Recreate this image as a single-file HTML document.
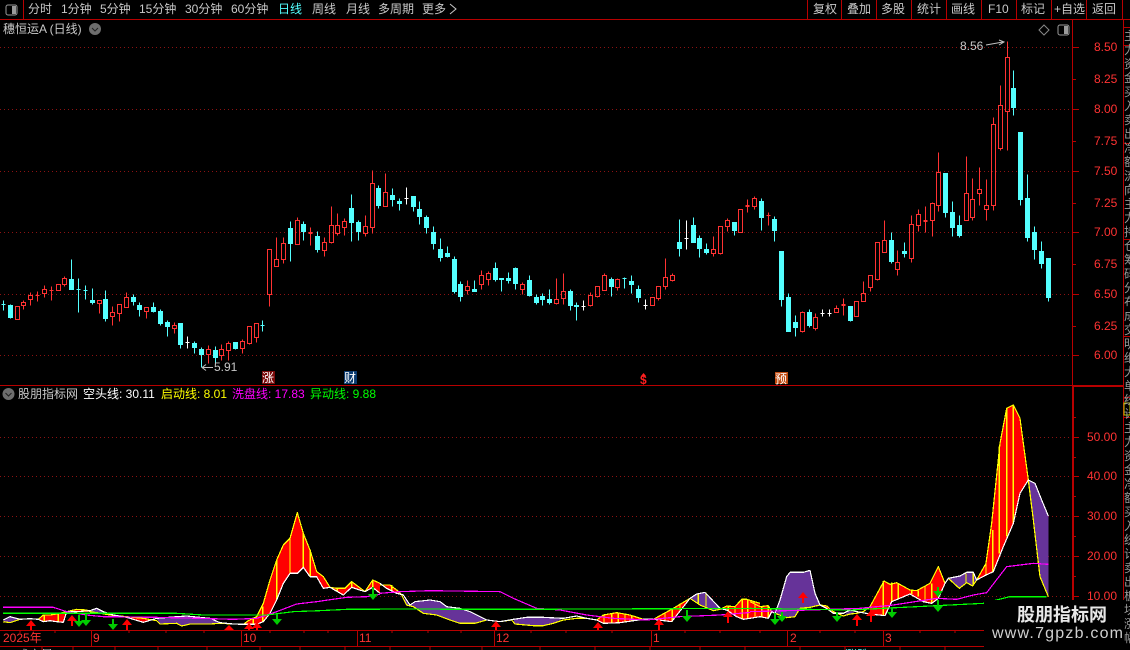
<!DOCTYPE html>
<html><head><meta charset="utf-8"><style>
html,body{margin:0;padding:0;background:#000;width:1130px;height:650px;overflow:hidden}
svg{position:absolute;left:0;top:0;font-family:"Liberation Sans","WenQuanYi Zen Hei","Noto Sans CJK SC",sans-serif;font-size:12px}
.t{fill:#c8c8c8}.p{fill:#ff3333}
#s{position:absolute;left:1124px;top:29px;width:6px;height:620px;overflow:hidden;color:#999;font:12px/14px "WenQuanYi Zen Hei","Noto Sans CJK SC",sans-serif}
#s div{width:12px}
</style></head><body>
<svg width="1130" height="650" viewBox="0 0 1130 650">
<rect width="1130" height="650" fill="#000"/>
<g stroke="#8c1212" stroke-dasharray="1 3" fill="none" shape-rendering="crispEdges">
<path d="M0 47.5H1072M0 109.5H1072M0 171.5H1072M0 232.5H1072M0 294.5H1072M0 355.5H1072M0 437.5H1072M0 476.5H1072M0 516.5H1072M0 556.5H1072M0 596.5H1072"/>
</g>
<g stroke="#b80000" fill="none" shape-rendering="crispEdges">
<path d="M0 19.5H1130M23.5 0V19M807.5 0V19M841.5 0V19M876.5 0V19M911.5 0V19M946.5 0V19M981.5 0V19M1016.5 0V19M1051.5 0V19M1086.5 0V19M1122.5 0V19"/>
<path d="M0 385.5H1123M1072.5 19V600M1123.5 19V600M1073 47.5h6M1073 79.5h3M1073 109.5h6M1073 141.5h3M1073 171.5h6M1073 203.5h3M1073 232.5h6M1073 264.5h3M1073 294.5h6M1073 326.5h3M1073 355.5h6"/>
<path d="M1072 386.5h51M1073.5 386V600M1073 437.5h6M1073 457.5h3M1073 476.5h6M1073 496.5h3M1073 516.5h6M1073 536.5h3M1073 556.5h6M1073 576.5h3M1073 596.5h6M1073 417.5h3"/>
<path d="M1124 27.5h6M1124 45.5h6M1124 143.5h6M1124 239.5h6M1124 336.5h6M1124 397.5h6M1124 417.5h6"/>
<path d="M0 630.5H984M0 646.5H984M91.5 630V646M241.5 630V646M357.5 630V646M494.5 630V646M651.5 630V646M787.5 630V646M883.5 630V646"/>
<path d="M20 630v3M55 630v3M129 630v3M166 630v3M204 630v3M270 630v3M304 630v3M328 630v3M392 630v3M428 630v3M461 630v3M531 630v3M566 630v3M612 630v3M685 630v3M720 630v3M760 630v3M820 630v3M855 630v3M920 630v3M955 630v3"/>
<path d="M42 646v4M73 646v4M115 646v4M158 646v4M207 646v4M260 646v4M300 646v4M345 646v4M390 646v4M430 646v4M482 646v4M540 646v4M595 646v4M650 646v4M700 646v4M745 646v4M800 646v4M845 646v4M900 646v4M945 646v4"/>
</g>
<!-- candles -->
<g transform="translate(.5,.5)" shape-rendering="crispEdges">
<path fill="none" stroke="#ff3232" d="M15 306h4V319h-4zM23 300V302M23 305V309M21 302h4V305h-4zM30 292V295M30 299V305M28 295h4V299h-4zM37 291V301M35 295h4M44 285V289M44 293V297M42 289h4V293h-4zM51 286V300M49 290h4M56 284h4V290h-4zM64 276V278M64 284V286M62 278h4V284h-4zM99 303V313M97 300h4V303h-4zM112 306V312M112 316V325M110 312h4V316h-4zM119 313V321M117 304h4V313h-4zM126 292V297M124 297h4V307h-4zM146 311V318M144 307h4V311h-4zM174 322V325M174 328V333M172 325h4V328h-4zM208 345V349M208 354V363M206 349h4V354h-4zM221 344V349M221 355V360M219 349h4V355h-4zM228 341V343M228 350V360M226 343h4V350h-4zM242 339V341M242 348V353M240 341h4V348h-4zM249 343V344M247 326h4V343h-4zM256 337V342M254 323h4V337h-4zM269 294V306M267 249h4V294h-4zM276 237V259M274 259h4V266h-4zM283 237V243M283 259V263M281 243h4V259h-4zM297 217V220M295 220h4V244h-4zM310 227V245M308 232h4M308 233h4M324 237V242M324 250V256M322 242h4V250h-4zM331 206V225M331 242V243M329 225h4V242h-4zM337 213V225M337 233V235M335 225h4V233h-4zM344 218V221M344 227V235M342 221h4V227h-4zM365 215V226M365 233V236M363 226h4V233h-4zM372 170V183M372 227V233M370 183h4V227h-4zM385 173V192M383 192h4V206h-4zM467 280V286M467 290V294M465 286h4V290h-4zM481 270V275M481 284V289M479 275h4V284h-4zM488 271V273M488 279V285M486 273h4V279h-4zM522 282V284M522 289V294M520 284h4V289h-4zM556 278V299M556 303V304M554 299h4V303h-4zM563 273V291M563 298V304M561 291h4V298h-4zM590 292V295M590 305V306M588 295h4V305h-4zM597 296V297M595 286h4V296h-4zM604 273V275M602 275h4V290h-4zM617 278V279M617 287V290M615 279h4V287h-4zM650 297h4V305h-4zM658 298V300M656 286h4V298h-4zM665 258V277M665 286V289M663 277h4V286h-4zM672 273V275M672 280V281M670 275h4V280h-4zM713 236V249M713 253V256M711 249h4V253h-4zM720 253V254M718 226h4V253h-4zM727 218V220M727 226V231M725 220h4V226h-4zM738 209h4V232h-4zM747 199V212M745 205h4M745 206h4M754 196V198M754 206V209M752 198h4V206h-4zM768 212V225M766 215h4M802 311V312M802 331V332M800 312h4V331h-4zM815 313V317M815 328V330M813 317h4V328h-4zM836 305V308M834 308h4V312h-4zM843 298V315M841 304h4M841 305h4M854 301h4V316h-4zM863 281V293M861 293h4V301h-4zM870 287V291M868 275h4V287h-4zM877 279V280M875 242h4V279h-4zM884 220V240M882 240h4V252h-4zM897 250V262M897 269V275M895 262h4V269h-4zM911 215V224M911 258V262M909 224h4V258h-4zM918 209V214M918 225V231M916 214h4V225h-4zM925 206V232M923 220h4M923 221h4M932 202V203M932 220V236M930 203h4V220h-4zM938 152V172M938 205V211M936 172h4V205h-4zM966 156V193M964 193h4V220h-4zM972 178V199M972 217V220M970 199h4V217h-4zM979 167V189M979 193V205M977 189h4V193h-4zM986 179V205M986 209V220M984 205h4V209h-4zM993 117V124M993 205V210M991 124h4V205h-4zM1000 85V105M1000 148V150M998 105h4V148h-4zM1007 41V57M1007 111V150M1005 57h4V111h-4z"/>
<path fill="#54ffff" stroke="#54ffff" d="M3 300V310M1 304h4M10 304V318M8 305h4V317h-4zM71 259V289M69 279h4V289h-4zM78 278V312M76 289h4M85 285V299M83 290h4M92 288V304M90 300h4V302h-4zM105 290V321M103 299h4V318h-4zM133 294V305M131 297h4V301h-4zM139 302V316M137 305h4V309h-4zM153 302V312M151 307h4V311h-4zM160 309V325M158 311h4V323h-4zM167 320V336M165 322h4V326h-4zM180 323V348M178 323h4V344h-4zM194 341V353M192 343h4V347h-4zM201 347V367M199 349h4V354h-4zM215 346V362M213 350h4V357h-4zM235 342V349M233 342h4V348h-4zM262 320V331M260 325h4M290 221V261M288 228h4V243h-4zM303 221V240M301 224h4V231h-4zM317 231V252M315 236h4V249h-4zM351 194V241M349 208h4V222h-4zM358 220V240M356 222h4V231h-4zM378 185V208M376 188h4V205h-4zM392 188V206M390 195h4V199h-4zM399 198V210M397 201h4V203h-4zM413 196V211M411 196h4V206h-4zM419 201V224M417 209h4V216h-4zM426 215V233M424 217h4V227h-4zM433 226V249M431 232h4V243h-4zM440 238V261M438 249h4V257h-4zM447 246V257M445 253h4V256h-4zM454 256V293M452 259h4V291h-4zM460 281V301M458 284h4V296h-4zM474 280V291M472 289h4V291h-4zM495 262V281M493 268h4V279h-4zM501 278V291M499 278h4V279h-4zM508 272V283M506 278h4V280h-4zM515 267V289M513 268h4V283h-4zM529 275V296M527 280h4V295h-4zM536 294V304M534 297h4V302h-4zM542 293V305M540 296h4V299h-4zM549 289V304M547 299h4V302h-4zM570 289V310M568 291h4V305h-4zM576 302V320M574 305h4V306h-4zM611 277V296M609 279h4V286h-4zM624 277V288M622 278h4M631 275V293M629 281h4V284h-4zM638 285V302M636 289h4V297h-4zM679 219V256M677 242h4V248h-4zM693 217V242M691 225h4V242h-4zM699 235V257M697 238h4V248h-4zM706 243V254M704 249h4V252h-4zM734 222V235M732 222h4V230h-4zM761 198V230M759 201h4V217h-4zM774 216V241M772 219h4V230h-4zM781 251V306M779 251h4V299h-4zM788 293V331M786 297h4V331h-4zM795 315V336M793 322h4V327h-4zM809 309V327M807 312h4V325h-4zM850 306V321M848 306h4V320h-4zM891 232V263M889 240h4V261h-4zM904 242V257M902 251h4V253h-4zM945 173V217M943 173h4V212h-4zM952 201V236M950 212h4V227h-4zM959 215V237M957 225h4V235h-4zM1013 70V115M1011 88h4V107h-4zM1020 132V205M1018 132h4V199h-4zM1027 174V241M1025 198h4V237h-4zM1034 226V259M1032 232h4V249h-4zM1041 241V268M1039 251h4V263h-4zM1048 258V301M1046 258h4V297h-4z"/>
<path fill="none" stroke="#fff" d="M187 336V348M185 342h4M406 187V204M404 198h4M583 300V310M581 306h4M645 299V309M643 305h4M686 220V249M684 238h4M822 309V316M820 313h4M829 309V316M827 313h4"/>
</g>
<!-- high/low marks -->
<path d="M202 367.5H213M202 367.5l4-3M202 367.5l4 3M986 45L1003 42M999 40l5 2-5 3" stroke="#c0c0c0" fill="none"/>
<text class="t" x="214" y="371">5.91</text>
<text class="t" x="960" y="50">8.56</text>
<!-- indicator -->
<g fill="none" stroke-width="3.6" stroke-linejoin="round" shape-rendering="crispEdges">
<g transform="translate(0,500) scale(.33333)">
<g fill="#f00" stroke="none"><polygon points="115,358 130,345 150,345 170,342 200,335 190,367 170,365 150,362 130,365"/><polygon points="200,335 230,328 260,330 270,335 230,337"/><polygon points="380,352 430,355 465,358 430,367"/><polygon points="730,373 745,362 770,350 790,310 810,240 830,180 850,135 870,115 892,38 910,100 930,150 950,215 970,230 990,262 970,265 950,230 930,230 910,202 892,220 870,220 850,250 830,300 810,340 790,365 770,373"/><polygon points="1000,266 1035,265 1055,245 1075,260 1095,275 1055,262 1030,285"/><polygon points="1095,275 1118,240 1140,250 1140,280 1118,262"/></g>
<g fill="#663399" stroke="none"><polygon points="10,360 30,350 60,358 30,368 10,365"/><polygon points="270,335 290,325 310,335 330,345 290,338"/><polygon points="470,355 530,350 560,348 630,355 660,368 640,372 570,372 545,378 530,370 480,372"/></g>
<path stroke="#ff0" d="M133 345V365M175 342V365M760 352V373M788 320V368M830 180V300M870 115V220M910 100V202M931 150V230M1012 265V275M1055 245V262M1118 240V262"/>
<polyline stroke="#ff0" points="10,365 30,368 60,358 90,356 115,358 130,345 150,345 170,342 200,335 230,328 260,330 270,335 290,338 330,345 380,350 430,355 470,362 480,372 530,370 545,378 570,372 630,372 660,370 700,372 730,373 745,362 770,350 790,310 810,240 830,180 850,135 870,115 892,38 910,100 930,150 950,215 970,230 990,262 1010,265 1035,265 1055,245 1075,260 1095,275 1118,240 1140,250"/>
<polyline stroke="#fff" points="10,360 30,350 60,358 90,356 115,358 130,365 150,362 170,365 190,367 200,335 230,335 270,332 290,325 310,335 340,345 380,352 430,367 470,355 530,350 560,348 630,355 660,368 700,372 730,373 770,373 790,365 810,340 830,300 850,250 870,220 892,220 910,202 930,230 950,230 970,265 990,262 1030,285 1055,262 1095,275 1118,262 1140,280"/>
<polyline stroke="#ff00ff" points="9,322 160,322 200,335 260,345 310,350 470,352 600,355 700,358 770,355 830,335 890,312 950,305 1040,292 1100,290 1140,283"/>
<polyline stroke="#00ff00" points="9,340 530,340 610,345 800,345 880,335 960,332 1040,328 1140,328"/>
</g>
<g transform="translate(380,560) scale(.33333)">
<g fill="#f00" stroke="none"><polygon points="0,75 30,75 50,90 65,105 50,100 20,85 0,70"/><polygon points="650,180 670,165 710,158 750,165 790,178 720,188 670,190"/><polygon points="820,178 880,145 930,115 875,185"/><polygon points="1020,148 1040,138 1065,140 1085,118 1100,118 1140,130 1140,170 1090,178 1070,170 1040,150"/></g>
<g fill="#663399" stroke="none"><polygon points="70,105 90,135 105,125 150,120 180,125 200,140 240,145 270,155 320,180 285,190 240,190 210,180 170,165 130,160 100,140 80,135"/><polygon points="400,178 440,172 490,172 550,175 520,190 490,197 460,197 405,192"/><polygon points="930,115 950,102 975,97 1020,145 1000,152 960,135"/></g>
<path stroke="#ff0" d="M35 75V95M672 165V190M695 160V188M715 158V188M735 162V187M755 167V184M855 160V182M877 145V185M900 130V155M955 102V130M978 97V140M1045 138V152M1065 140V168M1087 118V178M1103 118V176M1122 124V172"/>
<polyline stroke="#ff0" points="0,75 30,75 50,90 65,105 80,135 100,140 130,160 170,165 210,180 240,190 285,190 320,180 360,185 395,180 405,192 460,197 490,197 520,190 550,180 590,175 620,175 650,180 670,165 710,158 750,165 790,178 820,178 880,145 930,115 960,135 1000,152 1020,148 1040,138 1065,140 1085,118 1100,118 1140,130"/>
<polyline stroke="#fff" points="0,70 20,85 50,100 70,105 90,135 105,125 150,120 180,125 200,140 240,145 270,155 320,180 360,185 400,178 440,172 490,172 550,175 590,168 620,175 650,180 670,190 720,188 790,178 820,178 875,185 930,115 950,102 975,97 1020,145 1040,150 1070,170 1090,178 1140,170"/>
<polyline stroke="#ff00ff" points="0,100 60,95 150,92 360,95 400,115 470,145 540,150 620,165 700,175 800,180 900,170 1020,165 1140,155"/>
<polyline stroke="#00ff00" points="0,147 400,148 1140,145"/>
</g>
<g transform="translate(750,390) scale(.33333)">
<g fill="#f00" stroke="none"><polygon points="0,635 10,640 30,650 55,647 65,665 55,685 30,680 0,685"/><polygon points="210,645 230,648 250,665 250,670 230,655"/><polygon points="360,650 402,573 420,583 440,578 480,600 500,602 540,580 565,530 585,580 565,625 545,640 520,635 480,612 425,635 405,677 360,672"/><polygon points="680,570 708,520 725,400 750,160 770,55 790,45 810,85 820,160 835,270 810,310 790,400 760,470 730,545 708,555"/></g>
<g fill="#663399" stroke="none"><polygon points="75,670 90,630 110,560 120,547 160,547 180,541 195,610 210,645 180,652 150,655 135,680 110,683"/><polygon points="285,675 300,660 315,670 300,675"/><polygon points="595,565 630,558 650,547 670,547 680,570 668,588 650,578 628,595"/><polygon points="835,270 855,280 875,330 895,378 895,620 870,560 850,390"/></g>
<path stroke="#ff0" d="M15 640V682M35 650V680M55 647V685M400 573V677M425 578V635M445 580V625M485 600V612M505 602V620M525 590V635M545 580V640M648 550V578M670 547V585M708 520V555M728 420V545M748 170V490M770 55V440M790 45V400"/>
<polyline stroke="#ff0" points="0,635 10,640 30,650 55,647 65,665 75,670 110,683 135,680 150,655 180,652 210,645 230,648 250,665 280,678 300,672 320,670 340,665 360,650 402,573 420,583 440,578 480,600 500,602 540,580 565,530 585,580 595,565 628,595 650,578 668,588 680,570 708,520 725,400 750,160 770,55 790,45 810,85 820,160 835,270 850,390 870,560 895,620"/>
<polyline stroke="#fff" points="0,685 30,680 55,685 65,665 75,670 90,630 110,560 120,547 160,547 180,541 195,610 210,645 230,655 250,670 280,670 300,660 320,665 360,672 405,677 425,635 480,612 520,635 545,640 565,625 585,580 595,565 630,558 650,547 670,547 680,570 708,555 730,545 760,470 790,400 810,310 835,270 855,280 875,330 895,378"/>
<polyline stroke="#ff00ff" points="0,665 180,660 330,655 430,645 560,625 620,628 670,615 710,608 770,530 850,520 895,523"/>
<polyline stroke="#00ff00" points="0,655 300,660 500,650 700,640 780,620 890,620"/>
</g>
</g>
<!-- arrows -->
<path fill="#ff0000" d="M31 620l-5 6h4V630h2V626h4zM72 615l-5 6h4V626h2V621h4zM127 619l-5 6h4V630h2V625h4zM229 625l-5 5h10zM249 623l-5 6h4V630h2V629h4zM257 622l-5 6h4V630h2V628h4zM496 621l-5 6h4V630h2V627h4zM598 622l-5 6h4V630h2V628h4zM659 619l-5 6h4V630h2V625h4zM728 611l-5 6h4V623h2V617h4zM803 592l-5 6h4V603h2V598h4zM857 614l-5 6h4V626h2V620h4zM871 610l-5 6h4V622h2V616h4z"/>
<path fill="#00cc00" d="M79 627l-5-6h4V615h2V621h4zM86 626l-5-6h4V614h2V620h4zM113 630l-5-6h4V619h2V624h4zM277 625l-5-6h4V614h2V619h4zM373 600l-5-6h4V587h2V594h4zM687 622l-5-6h4V610h2V616h4zM775 625l-5-6h4V613h2V619h4zM782 622l-5-6h4V612h2V616h4zM837 622l-5-6h4V612h2V616h4zM892 618l-5-6h4V607h2V612h4zM938 597l-5-6h4V587h2V591h4zM938 612l-5-6h4V600h2V606h4z"/>
<!-- badges -->
<rect x="262" y="371" width="13" height="13" fill="#7a0a0a"/><text x="262" y="382" fill="#fff">涨</text>
<rect x="344" y="371" width="13" height="13" fill="#0b3a6e"/><text x="344" y="382" fill="#fff">财</text>
<text x="640" y="384" fill="#ff2020" font-weight="bold">$</text><path d="M641 376l2.500-3 2.500 3z" fill="#ff2020"/>
<rect x="775" y="372" width="13" height="12" fill="#c04a10"/><text x="775" y="383" fill="#fff">预</text>
<!-- toolbar -->
<rect x="6" y="5" width="11" height="10" rx="2" fill="none" stroke="#9a9a9a"/><rect x="12" y="6" width="4" height="8" fill="#9a9a9a"/>
<g class="t">
<text x="28" y="13">分时</text><text x="61" y="13">1分钟</text><text x="100" y="13">5分钟</text><text x="139" y="13">15分钟</text><text x="185" y="13">30分钟</text><text x="231" y="13">60分钟</text>
<text x="278" y="13" style="fill:#54ffff">日线</text><text x="312" y="13">周线</text><text x="346" y="13">月线</text><text x="378" y="13">多周期</text><text x="422" y="13">更多</text>
<text x="813" y="13">复权</text><text x="847" y="13">叠加</text><text x="881" y="13">多股</text><text x="917" y="13">统计</text><text x="951" y="13">画线</text><text x="988" y="13">F10</text><text x="1021" y="13">标记</text><text x="1054" y="13">+自选</text><text x="1092" y="13">返回</text>
<text x="3" y="33">穗恒运A (日线)</text>
<text x="18" y="398">股朋指标网</text>
<text x="17" y="659">成交量</text>
</g>
<text x="845" y="659" fill="#54ffff">涨跌</text>
<path d="M450 4l6 5-6 5" fill="none" stroke="#c8c8c8"/>
<circle cx="95" cy="29" r="6" fill="#6e6e6e"/><path d="M92 28l3 3 3-3" stroke="#222" fill="none"/>
<circle cx="8.500" cy="394" r="6" fill="#6e6e6e"/><path d="M5.500 393l3 3 3-3" stroke="#222" fill="none"/>
<path d="M1044 25l5 5-5 5-5-5z" fill="none" stroke="#888"/>
<rect x="1058" y="25" width="11" height="10" rx="2" fill="none" stroke="#9a9a9a"/><rect x="1064" y="26" width="4" height="8" fill="#9a9a9a"/>
<text x="83" y="398" fill="#fff">空头线: 30.11</text>
<text x="161" y="398" fill="#ffff00">启动线: 8.01</text>
<text x="232" y="398" fill="#ff00ff">洗盘线: 17.83</text>
<text x="310" y="398" fill="#00ff00">异动线: 9.88</text>
<!-- axes labels -->
<g class="p">
<text x="1094" y="51">8.50</text><text x="1094" y="83">8.25</text><text x="1094" y="113">8.00</text><text x="1094" y="145">7.75</text><text x="1094" y="175">7.50</text><text x="1094" y="207">7.25</text><text x="1094" y="236">7.00</text><text x="1094" y="268">6.75</text><text x="1094" y="298">6.50</text><text x="1094" y="330">6.25</text><text x="1094" y="359">6.00</text>
<text x="1087" y="441">50.00</text><text x="1087" y="480">40.00</text><text x="1087" y="520">30.00</text><text x="1087" y="560">20.00</text><text x="1087" y="600">10.00</text>
<text x="3" y="642">2025年</text><text x="93" y="642">9</text><text x="243" y="642">10</text><text x="359" y="642">11</text><text x="496" y="642">12</text><text x="653" y="642">1</text><text x="790" y="642">2</text><text x="885" y="642">3</text>
</g>
<rect x="1124" y="403" width="6" height="12" fill="none" stroke="#c8c800"/>
<!-- watermark -->
<rect x="984" y="600" width="146" height="50" fill="#000"/>
<text x="1017" y="621" fill="#e8e8e8" font-size="18" font-weight="bold" style="font-family:'Noto Sans CJK SC',sans-serif">股朋指标网</text>
<text x="992" y="638" fill="#d0d0d0" font-size="16" textLength="131">www.7gpzb.com</text>
</svg>
<div id="s"><div>主力资金买入卖出净额流向主力持仓筹码分布成交明细大单统计主力资金净额买入统计卖出板块涨幅</div></div>
</body></html>
